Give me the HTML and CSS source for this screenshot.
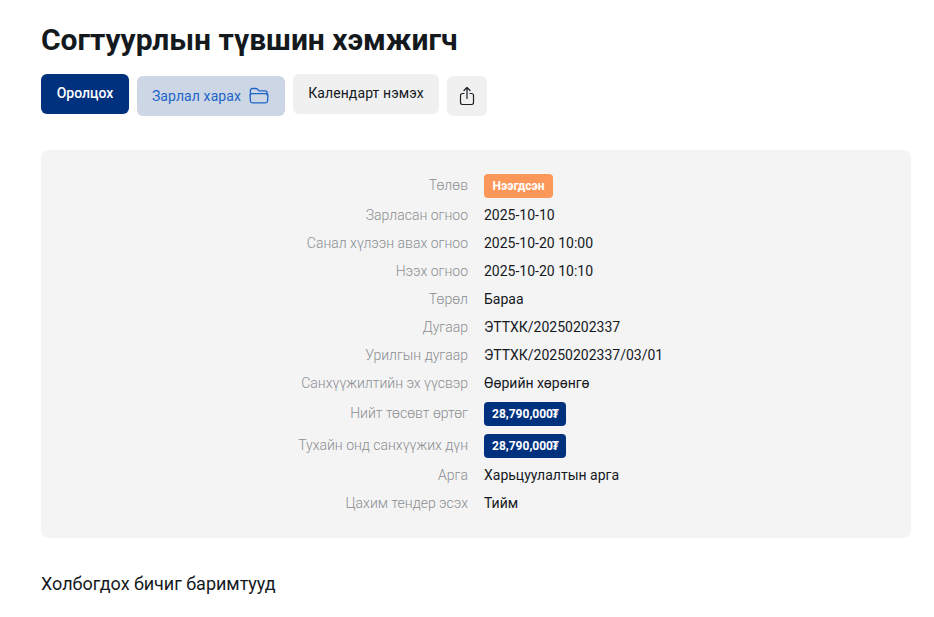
FILE: index.html
```html
<!DOCTYPE html>
<html lang="en">
<head>
  <meta charset="UTF-8" />
  <title>Согтуурлын түвшин хэмжигч</title>
  <link rel="stylesheet" href="styles.css">
</head>
<body>
  <h1 class="title">Согтуурлын түвшин хэмжигч</h1>
  <div class="actions">
    <button class="btn btn-primary">Оролцох</button>
    <button class="btn btn-soft">Зарлал харах
      <svg class="icon" width="22" height="22" viewBox="0 0 20 20" fill="none" stroke="#1c64c8" stroke-width="1.2" stroke-linejoin="round" stroke-linecap="round">
        <path d="M2.2 9V5a1.8 1.8 0 0 1 1.8-1.8h3.2c.5 0 .9.2 1.2.5l1.6 1.6h5.6a1.800 1.800 0 0 1 1.800 1.800V9"/>
        <path d="M3.6 7.900h12.800a1.700 1.700 0 0 1 1.700 1.800l-.3 4.800a1.800 1.800 0 0 1-1.800 1.700H4a1.800 1.800 0 0 1-1.800-1.700l-.3-4.800a1.700 1.700 0 0 1 1.700-1.800z"/>
      </svg>
    </button>
    <button class="btn btn-grey">Календарт нэмэх</button>
    <button class="btn btn-share" aria-label="share">
      <svg width="16" height="20" viewBox="0 0 16 20" fill="none" stroke="#1a1f24" stroke-width="1.2" stroke-linejoin="round" stroke-linecap="round">
        <path d="M5 7.500H3.400A1.900 1.900 0 0 0 1.500 9.400v7.200a1.900 1.900 0 0 0 1.900 1.900h9.200a1.900 1.900 0 0 0 1.900-1.900V9.400a1.900 1.900 0 0 0-1.900-1.900H11"/>
        <path d="M8 12.500V1.500M5 4.500l3-3 3 3"/>
      </svg>
    </button>
  </div>

  <div class="info">
    <div class="label">Төлөв</div>
    <div class="value"><span class="badge badge-orange">Нээгдсэн</span></div>
    <div class="label">Зарласан огноо</div>
    <div class="value">2025-10-10</div>
    <div class="label">Санал хүлээн авах огноо</div>
    <div class="value">2025-10-20 10:00</div>
    <div class="label">Нээх огноо</div>
    <div class="value">2025-10-20 10:10</div>
    <div class="label">Төрөл</div>
    <div class="value">Бараа</div>
    <div class="label">Дугаар</div>
    <div class="value">ЭТТХК/20250202337</div>
    <div class="label">Урилгын дугаар</div>
    <div class="value">ЭТТХК/20250202337/03/01</div>
    <div class="label">Санхүүжилтийн эх үүсвэр</div>
    <div class="value">Өөрийн хөрөнгө</div>
    <div class="label">Нийт төсөвт өртөг</div>
    <div class="value"><span class="badge badge-navy">28,790,000<span class="tugrik">₮</span></span></div>
    <div class="label">Тухайн онд санхүүжих дүн</div>
    <div class="value"><span class="badge badge-navy">28,790,000<span class="tugrik">₮</span></span></div>
    <div class="label">Арга</div>
    <div class="value">Харьцуулалтын арга</div>
    <div class="label">Цахим тендер эсэх</div>
    <div class="value">Тийм</div>
  </div>

  <h2 class="docs">Холбогдох бичиг баримтууд</h2>
</body>
</html>
```

FILE: styles.css
```css
body {
  margin: 0;
  padding: 20px 23px 0 41px;
  font-family: Roboto, "Noto Sans", sans-serif;
  color: #14191e;
  background: #fff;
}
.title {
  margin: 0;
  font-size: 30px;
  line-height: 40px;
  font-weight: 700;
  letter-spacing: -0.03px;
}
.actions {
  display: flex;
  align-items: flex-start;
  gap: 8px;
  margin-top: 14px;
}
.btn {
  display: flex;
  align-items: center;
  justify-content: center;
  height: 40px;
  padding: 0 0 2px;
  border: none;
  border-radius: 6px;
  font-family: inherit;
  font-size: 14px;
  line-height: 20px;
  white-space: nowrap;
}
.btn-primary {
  width: 88px;
  background: #00317f;
  color: #fff;
  font-weight: 500;
  padding-bottom: 3px;
}
.btn-soft {
  width: 148px;
  margin-top: 2px;
  gap: 7px;
  background: #ccd6e5;
  color: #1c64c8;
  letter-spacing: 0.1px;
  padding-bottom: 0;
}
.btn-grey {
  width: 146px;
  background: #f0f0f0;
  color: #14191e;
  letter-spacing: 0.1px;
  padding-bottom: 3px;
}
.btn-share {
  width: 40px;
  margin-top: 2px;
  padding: 0;
  background: #f0f0f0;
}
.info {
  display: grid;
  grid-template-columns: 1fr 1fr;
  gap: 8px 16px;
  align-items: center;
  margin-top: 34px;
  padding: 24px;
  background: #f4f4f4;
  border-radius: 8px;
  font-size: 14px;
  line-height: 20px;
}
.label {
  text-align: right;
  color: #8b8e92;
  font-weight: 300;
  position: relative;
  top: -1px;
}
.value {
  color: #14191e;
  display: flex;
  position: relative;
  top: -1px;
}
.badge {
  display: block;
  height: 24px;
  padding: 0 8px;
  border-radius: 4px;
  color: #fff;
  font-size: 12px;
  font-weight: 700;
  line-height: 24px;
  position: relative;
  top: 1px;
}
.badge-orange {
  background: #fb9758;
  padding: 0 8.5px;
}
.badge-navy { background: #00317f; }
.tugrik {
  font-family: "Noto Sans", sans-serif;
  font-weight: 700;
  margin-left: -1px;
  margin-right: -1px;
}
.docs {
  margin: 34px 0 0;
  font-size: 18px;
  line-height: 24px;
  font-weight: 400;
  letter-spacing: -0.03px;
}
```
